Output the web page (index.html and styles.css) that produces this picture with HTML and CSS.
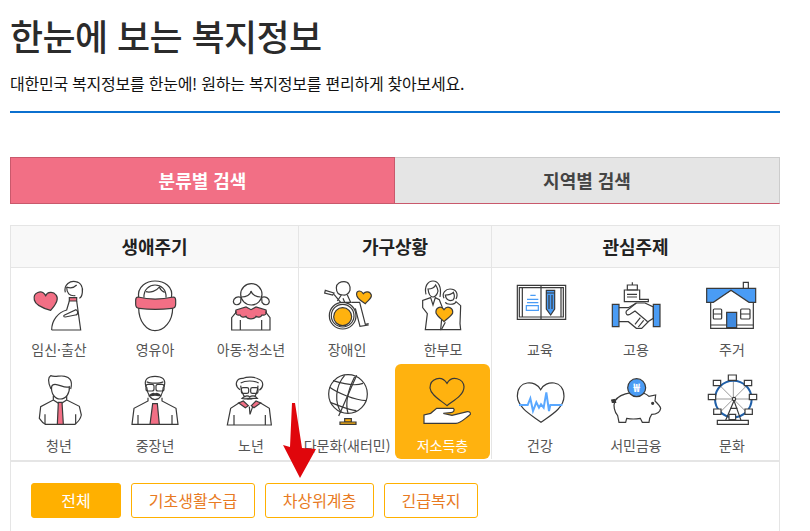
FILE: index.html
```html
<!DOCTYPE html>
<html lang="ko">
<head>
    <meta charset="UTF-8">
    <meta name="viewport" content="width=device-width, initial-scale=1.0">
    <title>한눈에 보는 복지정보</title>
    <link rel="stylesheet" href="styles.css">
</head>
<body>
    <div class="wrap">
        <header class="page-head">
            <h1>한눈에 보는 복지정보</h1>
            <p>대한민국 복지정보를 한눈에! 원하는 복지정보를 편리하게 찾아보세요.</p>
        </header>

        <div class="tabs">
            <a class="tab tab-on">분류별 검색</a>
            <a class="tab">지역별 검색</a>
        </div>

        <section class="panel">
            <div class="groups">
                <div class="group group-life">
                    <h2>생애주기</h2>
                    <div class="items">
                        <a class="item">
                            <svg class="ic" viewBox="42 36 210 180">
                                <path class="pink" d="M107 92C95 72 68 82 73 105C76 120 100 130 122 136C135 122 148 102 138 90C130 78 112 80 107 92Z"/>
                                <path d="M166 82C160 58 182 46 197 50C214 53 219 68 217 82C216 92 212 98 208 100"/>
                                <path d="M170 66C170 84 178 94 196 92M170 66C180 70 192 68 200 60"/>
                                <path class="pink" d="M178 98H200V108H178Z"/>
                                <path d="M125 195C125 165 145 142 170 135L178 108M200 108L212 195H125"/>
                                <path d="M164 150L198 134C206 138 204 150 196 150L166 156C160 156 160 152 164 150Z"/>
                            </svg>
                            <span>임신·출산</span>
                        </a>
                        <a class="item">
                            <svg class="ic" viewBox="330 36 210 180">
                                <path d="M386 100C380 62 412 48 435 48C460 48 492 62 484 100"/>
                                <path d="M402 98C400 72 420 60 435 60C452 60 470 72 468 98"/>
                                <path d="M408 80C420 84 440 78 448 66C452 76 458 80 464 82"/>
                                <path d="M386 128C386 170 410 197 435 197C462 197 488 170 488 128"/>
                                <path class="pink" d="M384 96C415 104 455 104 490 96C496 96 497 100 497 106V118C497 126 492 130 486 130C450 134 420 134 388 130C382 130 377 126 377 118V106C377 100 378 96 384 96Z"/>
                            </svg>
                            <span>영유아</span>
                        </a>
                        <a class="item">
                            <svg class="ic" viewBox="618 36 210 180">
                                <circle cx="724" cy="88" r="32"/>
                                <path d="M695 96C708 96 722 90 723 78C726 90 740 96 752 96"/>
                                <path d="M693 97C682 92 670 100 670 110C672 122 686 122 692 112Z"/>
                                <path d="M755 97C766 92 778 100 778 110C776 122 762 122 756 112Z"/>
                                <path class="pink" d="M678 135L708 126L723 134L738 126L768 135C772 148 764 152 756 150C752 158 744 158 738 154C734 164 712 164 708 154C702 158 694 158 690 150C682 152 674 148 678 135Z"/>
                                <path d="M680 140L665 158V195H780V158L766 140M691 165V195M755 165V195"/>
                            </svg>
                            <span>아동·청소년</span>
                        </a>
                        <a class="item">
                            <svg class="ic" viewBox="42 24 210 180">
                                <path d="M123 72C112 50 115 36 122 32C135 38 150 30 165 34C175 36 190 44 182 72"/>
                                <path d="M125 65C122 85 135 102 150 102C168 102 180 85 178 65C165 72 150 58 135 58C130 58 126 60 125 65Z"/>
                                <path d="M130 92V105L92 125L88 160C95 170 100 175 106 178H195C205 170 212 160 214 150L208 124L170 105V92"/>
                                <path d="M105 178V148M197 178V148"/>
                                <path d="M130 105L150 118L170 105"/>
                                <path class="pink" d="M145 112H156L160 178H142Z"/>
                            </svg>
                            <span>청년</span>
                        </a>
                        <a class="item">
                            <svg class="ic" viewBox="330 24 210 180">
                                <path d="M408 66C400 42 415 34 435 34C456 34 470 42 462 66"/>
                                <path d="M410 50C420 56 450 56 460 50M410 66C412 90 424 104 435 104C448 104 458 90 460 66"/>
                                <rect x="408" y="58" width="24" height="20" rx="6"/>
                                <rect x="438" y="58" width="24" height="20" rx="6"/>
                                <path class="dark" d="M418 92C425 84 432 84 435 88C438 84 446 84 452 92C444 92 438 92 435 90C432 92 426 92 418 92Z"/>
                                <path d="M414 98V108L372 130L366 178H504L498 130L456 108V98"/>
                                <path d="M384 178V150M486 178V150"/>
                                <path class="pink" d="M428 116H442L448 178H420Z"/>
                            </svg>
                            <span>중장년</span>
                        </a>
                        <a class="item">
                            <svg class="ic" viewBox="618 24 210 180">
                                <path d="M690 74C670 60 680 38 700 40C712 34 735 36 745 42C762 48 762 66 748 76"/>
                                <path d="M692 54C706 46 732 46 746 54M692 62C694 88 706 102 718 102C732 102 742 88 744 62"/>
                                <rect x="694" y="68" width="22" height="17" rx="5"/>
                                <rect x="722" y="68" width="22" height="17" rx="5"/>
                                <path class="gray" d="M696 100C706 90 716 92 719 96C724 92 734 90 742 100C732 100 724 102 719 100C714 102 706 102 696 100Z"/>
                                <path d="M690 112L662 130L652 180H784L778 130L748 112"/>
                                <path d="M672 180V150M766 180V150M718 125L720 148L728 125"/>
                                <path class="pink" d="M686 114L700 108L715 122L706 128Z"/>
                                <path class="pink" d="M752 114L738 108L724 122L732 128Z"/>
                            </svg>
                            <span>노년</span>
                        </a>
                    </div>
                </div>

                <div class="group group-home">
                    <h2>가구상황</h2>
                    <div class="items">
                        <a class="item">
                            <svg class="ic" viewBox="42 36 210 180">
                                <path d="M115 68C115 55 128 50 138 50C152 50 158 62 156 76C152 86 145 92 135 90C122 90 115 82 115 68Z"/>
                                <path d="M130 90L118 108M148 90L158 112H140L135 100"/>
                                <path d="M82 76L108 84L104 90L80 84Z"/>
                                <path d="M108 88L128 112"/>
                                <circle cx="134" cy="152" r="40"/>
                                <circle cx="134" cy="152" r="34"/>
                                <circle class="gold" cx="134" cy="155" r="27"/>
                                <path d="M160 112L185 112L202 178L212 176M172 130L186 184L212 180"/>
                                <path class="gold" d="M196 86C186 72 172 78 177 94C180 102 192 110 202 116C210 106 222 100 220 90C216 78 202 78 196 86Z"/>
                            </svg>
                            <span>장애인</span>
                        </a>
                        <a class="item">
                            <svg class="ic" viewBox="330 36 210 180">
                                <path d="M384 88C378 64 390 48 405 48C420 48 432 64 426 96"/>
                                <path d="M390 72C402 72 410 66 413 60C418 68 420 72 420 78C418 90 410 96 405 96C398 96 392 88 390 72Z"/>
                                <path d="M398 98L374 106L374 128L388 146L382 194H428L434 130L424 104L412 98L405 120Z"/>
                                <path d="M438 100C430 84 444 72 456 72C474 72 482 86 474 102"/>
                                <path d="M442 90C454 90 462 86 466 82C470 90 470 98 466 104C456 110 444 106 442 90Z"/>
                                <path d="M442 112C446 120 470 120 474 110L488 122L486 176L488 194H430L442 172"/>
                                <path class="gold" d="M438 134C428 120 412 128 414 144C418 154 430 162 438 170C448 160 460 154 464 144C466 128 448 120 438 134Z"/>
                            </svg>
                            <span>한부모</span>
                        </a>
                        <a class="item">
                            <svg class="ic" viewBox="42 39 210 180">
                                <circle cx="150" cy="102" r="58"/>
                                <path d="M176 46L122 168"/>
                                <path d="M95 82C120 100 170 120 205 122M105 62C130 70 170 80 195 70M98 128C120 135 150 150 175 152"/>
                                <path d="M140 46C110 80 110 130 130 158M170 50C150 90 140 125 150 160"/>
                                <path class="gold" d="M140 176H160V186H140Z"/>
                                <path class="gold" d="M126 186H174V193H126Z"/>
                            </svg>
                            <span>다문화(새터민)</span>
                        </a>
                        <a class="item item-on">
                            <svg class="ic" viewBox="330 39 210 180">
                                <path d="M447 70C430 44 396 56 396 84C398 106 430 122 447 137C466 122 498 106 498 80C496 56 462 44 447 70Z"/>
                                <path class="white" d="M378 190V165L398 160L416 145H466C472 150 466 158 458 158L436 160L462 166L508 155C518 154 520 162 514 166C500 176 488 190 474 190Z"/>
                            </svg>
                            <span>저소득층</span>
                        </a>
                    </div>
                </div>

                <div class="group">
                    <h2>관심주제</h2>
                    <div class="items">
                        <a class="item">
                            <svg class="ic" viewBox="30 36 210 180">
                                <path d="M67 61H212V163H67Z"/>
                                <path d="M73 68H205V156H73ZM82 68V156M198 68V156M138 61V163"/>
                                <path class="lines" d="M106 91H122M96 103H130M96 113H130"/>
                                <path class="lines" d="M94 122H130V136H94Z"/>
                                <path class="blue" d="M154 76H179V132L167 150L154 132Z"/>
                                <path d="M154 84H179M162 90V132M171 90V132"/>
                            </svg>
                            <span>교육</span>
                        </a>
                        <a class="item">
                            <svg class="ic" viewBox="318 36 210 180">
                                <path d="M412 52V60M397 60H427V75H397Z"/>
                                <path d="M388 75H434V103H460V110H388Z"/>
                                <path d="M396 88H426M396 96H426" />
                                <path class="blue" d="M352 118H372V185H352Z"/>
                                <path class="blue" d="M475 118H495V185H475Z"/>
                                <path d="M372 128H400L424 114H450L475 126V160L462 168L440 190H424L400 170H372"/>
                                <path d="M424 114L394 138C390 148 398 152 405 148L420 138L458 170M436 158L420 178M446 166L430 186"/>
                            </svg>
                            <span>고용</span>
                        </a>
                        <a class="item">
                            <svg class="ic" viewBox="606 36 210 180">
                                <path d="M745 52H760V72H745Z"/>
                                <path class="white" d="M647 112L708 76L775 112V190H647Z"/>
                                <path class="blue" d="M635 70H782V112H762L708 76L655 112H635Z"/>
                                <path d="M647 180H775"/>
                                <rect x="655" y="132" width="25" height="30" rx="3"/>
                                <path d="M655 147H680M737 147H765"/>
                                <rect x="737" y="132" width="28" height="30" rx="3"/>
                                <path class="blue2" d="M695 142H725V188H695Z"/>
                            </svg>
                            <span>주거</span>
                        </a>
                        <a class="item">
                            <svg class="ic" viewBox="30 24 210 180">
                                <path d="M137 74C122 44 67 44 67 94C69 130 112 152 138 172C165 152 207 130 207 94C207 44 152 44 137 74Z"/>
                                <path class="pulse" d="M72 120H98L106 100L114 138L124 112L132 128L138 118L146 128L154 82L162 138L166 120H202"/>
                            </svg>
                            <span>건강</span>
                        </a>
                        <a class="item">
                            <svg class="ic" viewBox="318 24 210 180">
                                <path d="M360 108C375 82 440 72 462 94L482 90L480 108C488 116 496 124 497 130C495 142 484 148 470 148C465 155 462 165 462 172H442L436 160C420 163 405 162 395 160L392 172H372L368 152C358 140 354 122 360 108Z"/>
                                <circle class="dark" cx="473" cy="115" r="3"/>
                                <path class="dark" d="M350 105L360 103L362 112L352 112Z"/>
                                <circle class="blue" cx="425" cy="68" r="27"/>
                                <text class="won" x="425" y="80" text-anchor="middle">₩</text>
                            </svg>
                            <span>서민금융</span>
                        </a>
                        <a class="item">
                            <svg class="ic" viewBox="606 24 210 180">
                                <path class="spokes" d="M715 102L715 44M715 102L756 61M715 102L773 102M715 102L756 143M715 102L674 143M715 102L657 102M715 102L674 61"/>
                                <circle class="ring" cx="715" cy="102" r="55"/>
                                <circle class="white" cx="717" cy="102" r="5"/>
                                <path class="white" d="M700 30H724V46H700Z"/>
                                <path class="white" d="M655 46H677V62H655Z"/>
                                <path class="white" d="M748 46H770V62H748Z"/>
                                <path class="white" d="M640 88H662V104H640Z"/>
                                <path class="white" d="M763 88H785V104H763Z"/>
                                <path class="white" d="M656 132H678V148H656Z"/>
                                <path class="white" d="M750 132H772V148H750Z"/>
                                <path class="white" d="M702 148H722V164H702Z"/>
                                <path d="M717 107L692 166M717 107L738 166M705 130H728"/>
                                <path class="white" d="M667 166H760V178H667Z"/>
                            </svg>
                            <span>문화</span>
                        </a>
                    </div>
                </div>
            </div>

            <div class="subs">
                <a class="sub sub-on">전체</a>
                <a class="sub sub-basic">기초생활수급</a>
                <a class="sub sub-near">차상위계층</a>
                <a class="sub sub-urgent">긴급복지</a>
            </div>
        </section>
    </div>

    <!-- red arrow drawn over the list -->
    <svg class="arrow" viewBox="0 0 40 80">
        <polygon points="11,1 14,1 21,46 35,47 19,76 2,43 9,45"/>
    </svg>
</body>
</html>
```

FILE: styles.css
```css
html, body {
    height: 100%;
    overflow: hidden;
}

body {
    margin: 0;
    padding: 0;
    position: relative;
    background-color: #fff;
    color: #333;
    font-family: "Noto Sans CJK KR", "Noto Sans", sans-serif;
}

.wrap {
    width: 770px;
    margin-left: 10px;
}

.page-head {
    height: 111px;
    border-bottom: 2px solid #0b70cf;
    margin-bottom: 44px;
}

.page-head h1 {
    margin: 0;
    padding-top: 9px;
    font-size: 36px;
    font-weight: 500;
    letter-spacing: -0.6px;
    line-height: 52px;
    color: #2b2b2b;
}

.page-head p {
    margin: 11px 0 0;
    font-size: 16px;
    letter-spacing: -0.25px;
    line-height: 22px;
    color: #111;
}

.tabs {
    display: grid;
    grid-template-columns: 1fr 1fr;
    height: 47px;
    margin-bottom: 21px;
}

.tab {
    box-sizing: border-box;
    border: 1px solid #ccc;
    border-left: 0;
    border-bottom: 1px solid #c9596c;
    background-color: #e5e5e5;
    color: #444;
    font-size: 18px;
    font-weight: 700;
    line-height: 45px;
    text-align: center;
}

.tab-on {
    border: 1px solid #c9596c;
    background-color: #f26f85;
    color: #fff;
}

.panel {
    box-sizing: border-box;
    height: 310px;
    border: 1px solid #e5e5e5;
    border-bottom: 0;
}

.groups {
    display: grid;
    grid-template-columns: 288px 193px 287px;
}

.group-life, .group-home {
    box-shadow: inset -1px 0 0 #e5e5e5;
}

.group h2 {
    margin: 0;
    height: 41px;
    border-bottom: 1px solid #e5e5e5;
    background-color: #f8f8f8;
    color: #222;
    font-size: 18px;
    font-weight: 700;
    line-height: 41px;
    text-align: center;
}

.group-life h2, .group-home h2 {
    border-right: 1px solid #e5e5e5;
}

.items {
    display: grid;
    grid-template-columns: repeat(3, 96px);
    grid-template-rows: 96px 95px;
}

.group-home .items {
    grid-template-columns: repeat(2, 96px);
}

.item {
    display: flex;
    flex-direction: column;
    align-items: center;
    padding-top: 9px;
    box-sizing: border-box;
    color: #555;
    font-size: 14px;
    line-height: 20px;
    white-space: nowrap;
}

.item span {
    margin-top: 2px;
}

.item-on {
    margin-right: 1px;
    border-radius: 6px;
    background-color: #ffb20f;
    color: #fff;
}

.ic {
    width: 70px;
    height: 60px;
    fill: none;
    stroke: #3a3a3a;
    stroke-width: 3.6;
}

.ic .pink { fill: #f26f85; }
.ic .gold { fill: #ffb20f; }
.ic .blue { fill: #4a9cf5; }
.ic .blue2 { fill: #3f8ae0; }
.ic .white { fill: #fff; }
.ic .dark { fill: #333; }
.ic .gray { fill: #ddd; }
.ic .lines { stroke: #4a9cf5; }
.ic .pulse { stroke: #5aa8ff; stroke-width: 6; }
.ic .ring { stroke: #1f5fa8; stroke-width: 6; }
.ic .spokes { stroke: #999; stroke-width: 3; }
.ic .won {
    fill: #fff;
    stroke: none;
    font-family: "Noto Sans CJK KR", sans-serif;
    font-size: 34px;
    font-weight: 700;
}

.subs {
    display: flex;
    gap: 10px;
    padding: 21px 20px 0;
    margin-top: 1px;
    border-top: 2px solid #e5e5e5;
}

.sub {
    box-sizing: border-box;
    height: 35px;
    border: 1px solid #ffb000;
    border-radius: 3px;
    color: #e87a22;
    font-size: 16px;
    line-height: 33px;
    text-align: center;
}

.sub-on {
    width: 90px;
    background-color: #ffb000;
    color: #fff;
}

.sub-basic { width: 124px; }
.sub-near { width: 109px; }
.sub-urgent { width: 94px; }

.arrow {
    position: absolute;
    left: 281px;
    top: 402px;
    width: 40px;
    height: 80px;
    fill: #e0060c;
}
```
